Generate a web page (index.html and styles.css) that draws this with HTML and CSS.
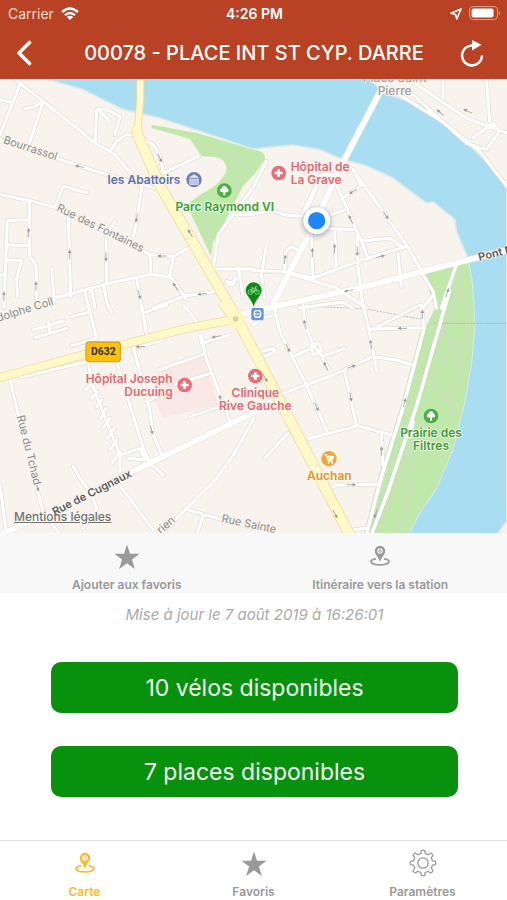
FILE: index.html
```html
<!DOCTYPE html>
<html lang="fr">
<head>
<meta charset="utf-8">
<meta name="viewport" content="width=device-width, initial-scale=1">
<title>Station 00078</title>
<link rel="stylesheet" href="styles.css">
</head>
<body>
<svg class="sprite" aria-hidden="true">
  <symbol id="star" viewBox="0 0 26 26"><path d="M13 .5 16 9.700H25.600L17.900 15.400 20.900 25 13 19.200 5.100 25 8.100 15.400.4 9.700H10Z" fill="currentColor"/></symbol>
  <symbol id="pin" viewBox="0 0 20 22">
    <path d="M6 13.800C2.900 14.200 1 15.200 1 16.600c0 1.900 4 3.300 9 3.300s9-1.400 9-3.300c0-1.400-1.900-2.400-5-2.800" fill="none" stroke="currentColor" stroke-width="1.700"/>
    <path fill-rule="evenodd" d="M10 .7a5.200 5.200 0 0 0-5.200 5.200c0 3.300 3.600 6 5.200 10.600 1.600-4.600 5.200-7.300 5.200-10.600A5.200 5.200 0 0 0 10 .7Zm0 2.500a2.800 2.800 0 1 1 0 5.600 2.800 2.800 0 0 1 0-5.600Z" fill="currentColor"/>
    <circle cx="10" cy="6" r="1.300" fill="none" stroke="currentColor" stroke-width=".8"/>
  </symbol>
  <symbol id="gear" viewBox="0 0 28 28">
    <g fill="none" stroke="currentColor" stroke-width="1.300" stroke-linejoin="round">
      <path d="M11.800 4.600 12.300 1.600Q14 .8 15.700 1.600L16.200 4.600Q17.700 5 19.100 5.800L21.600 4Q23.400 4.600 24 6.400L22.200 8.900Q23 10.300 23.400 11.800L26.400 12.300Q27.200 14 26.400 15.700L23.400 16.200Q23 17.700 22.200 19.100L24 21.600Q23.400 23.400 21.600 24L19.100 22.200Q17.700 23 16.200 23.400L15.700 26.400Q14 27.200 12.300 26.400L11.800 23.400Q10.300 23 8.900 22.200L6.400 24Q4.600 23.400 4 21.600L5.800 19.100Q5 17.700 4.600 16.200L1.600 15.700Q.8 14 1.600 12.300L4.600 11.800Q5 10.300 5.800 8.900L4 6.400Q4.600 4.600 6.400 4L8.900 5.800Q10.300 5 11.800 4.600Z"/>
      <circle cx="14" cy="14" r="5.200"/>
    </g>
  </symbol>
  <symbol id="tree" viewBox="-23 -23 46 46">
    <circle r="22" fill="#48ae45"/><path d="M-3 14V4Q-13 7-13-1-13-6-8-7-7-14 0-14T8-7Q13-6 13-1 13 7 3 4V14Z" fill="#fff"/>
  </symbol>
  <symbol id="cross" viewBox="-23 -23 46 46">
    <circle r="22" fill="#eb6d77"/><path d="M-4-12H4V-4H12V4H4V12H-4V4H-12V-4H-4Z" fill="#fff"/>
  </symbol>
  <symbol id="oneway" viewBox="-17 -7 34 14" overflow="visible">
    <path d="M-15 0H8" stroke="#aaa" stroke-width="3"/><path d="M3-5 14 0 3 5Z" fill="#999"/>
  </symbol>
</svg>

<div class="app">
  <header class="header">
    <div class="status">
      <div class="carrier">Carrier
        <svg width="18" height="14" viewBox="0 0 18 14" fill="none" stroke="#fff" stroke-width="2.400"><path d="M1 5Q9-2 17 5M4 8.200Q9 3.800 14 8.200"/><path d="M9 13 5.800 9.900Q9 7.400 12.200 9.900Z" fill="#fff" stroke="none"/></svg>
      </div>
      <div class="clock">4:26 PM</div>
      <div class="indicators">
        <svg width="12" height="12" viewBox="0 0 12 12" fill="none" stroke="#fff" stroke-width="1.600" stroke-linejoin="round"><path d="M11 1 1 5.200 5.600 6.400 6.800 11Z"/></svg>
        <svg width="32" height="15" viewBox="0 0 32 15"><rect x=".6" y=".6" width="28" height="13" rx="4" fill="none" stroke="#fff" stroke-opacity=".5"/><rect x="2.600" y="2.600" width="22" height="9" rx="2" fill="#fff"/><path d="M30 5Q32 7 30 9.500Z" fill="#fff" fill-opacity=".5"/></svg>
      </div>
    </div>
    <div class="navbar">
      <button class="icon-button" type="button" aria-label="Retour">
        <svg width="16" height="26" viewBox="0 0 16 26" fill="none" stroke="#fff" stroke-width="3.600" stroke-linecap="round" stroke-linejoin="round"><path d="M13.500 2.500 3 13 13.500 23.500"/></svg>
      </button>
      <h1 class="title">00078 - PLACE INT ST CYP. DARRE</h1>
      <button class="icon-button" type="button" aria-label="Actualiser">
        <svg width="24" height="28" viewBox="0 0 24 28"><path d="M13 6.500A10 10 0 1 0 22 16.500" fill="none" stroke="#fff" stroke-width="2.400"/><path d="M12 1 21.500 5.800 12 11.500Z" fill="#fff"/></svg>
      </button>
    </div>
  </header>

  <main class="main">
    <section class="map" aria-label="Carte">
      <svg class="map-canvas" viewBox="0 0 1521 1362" preserveAspectRatio="xMidYMin slice">
        <defs>
          <filter id="soft" x="-50%" y="-50%" width="200%" height="200%"><feGaussianBlur stdDeviation="8"/></filter>
          <g id="minor" fill="none" stroke-linejoin="round" stroke-linecap="round">
            <g transform="translate(0 -3)">
              <path d="M45 5 130 70 285 195 345 230 425 325M60 20 0 170M130 70 85 205M0 65 32 72M130 70 100 88 75 92M0 185 170 242 320 290 480 335M285 200 290 95 315 92 360 115 345 170M300 100 330 130M330 220 350 190 380 170 410 170 460 200 480 235 490 285 595 235M0 350 90 368 170 390M165 385 190 325 262 345M170 390 410 510 450 530 520 535 575 505M425 330 410 430 400 475M345 430 318 470 320 615M205 420 212 655M88 370 88 535 108 560 110 690M85 425 22 428 12 690M18 500 85 503M18 545 65 548 50 600 52 655M155 570 162 665 162 690M0 590 15 590M110 675 320 618 455 588 515 600 560 665M450 530 453 588M520 538 508 598M410 600 425 690M255 640 265 690M275 635 285 690M310 620 325 690M460 690 550 655 650 640 720 600M640 570 655 470 700 410 762 408M715 570 730 660M680 610 700 620 705 600M640 573 762 573"/>
            </g>
            <g transform="translate(759 -3)">
              <path d="M-60 410 0 330 40 250M-60 408 0 408 60 398 100 412 145 415 205 290 240 290M205 290 160 400M270 360 325 322 300 275M300 275 460 500 495 560 510 590 540 640 550 690M250 320 330 500 345 545M235 410 275 395M210 450 300 455M325 490 410 480 450 510M0 578 90 580 180 600 330 545 460 505M175 470 180 600M245 460 250 575M312 475 315 570 330 690M435 525 445 625M95 580 98 520 115 505 130 515M40 505 25 590 35 660M90 580 250 630 340 690M140 690 270 672 300 690M610 560 565 690M510 690 540 650M470 5 640 120 762 165M570 0 570 60M700 0 710 130M400 30 480 50 640 195 700 215 740 160 720 135 660 180M430 45 560 125 680 220 762 325"/>
            </g>
            <g transform="translate(0 678)">
              <path d="M265 0 290 100 215 122M215 35 265 22M325 0 335 22M425 0 440 90M435 22 500 0M550 0 590 50M100 75 190 48M105 98 200 70M145 50 150 80M60 217 260 170M30 225 55 330M110 550 130 620M265 172 275 235 360 450 360 500M350 170 430 430 450 475M275 235 255 255M292 260 275 280M305 285 290 305M318 310 302 340M330 340 308 370M342 370 322 400M350 405 330 435M360 440 335 475M360 450 420 430 435 465 385 460M400 130 445 290 460 390 490 460M475 195 610 148M605 90 615 150 690 350M600 90 605 115 690 90M525 240 630 205M570 335 650 308M440 290 480 270M220 485 240 520 270 560 290 610 250 670M450 475 490 510M355 535 470 690M762 340 700 450 650 520 560 610 480 690M555 612 600 625 762 670M610 630 590 690M0 540 20 690M130 620 180 690M400 130 490 105"/>
            </g>
            <g transform="translate(759 678)">
              <path d="M0 60 30 40 70 28M65 10 80 80 155 230 225 385M150 0 155 50 180 120 205 150 225 190M175 120 200 115 205 140 180 150ZM120 155 175 130M215 152 275 130M35 155 65 140 60 130 25 140M90 265 240 210 360 155 430 165 485 182M330 0 345 60 372 200M355 75 500 0M355 72 515 68M505 0 512 60M275 200 310 360M165 402 315 362 415 390M385 390 390 480M235 550 250 540 375 538M35 460 105 385M300 675 345 668M480 350 470 395"/>
            </g>
          </g>
          <g id="major" fill="none" stroke-linecap="round" stroke-linejoin="round">
            <path d="M1155 10 1020 267 948 425 822 670M700 710 820 683 1089 625 1270 577 1521 513"/>
            <path d="M0 1368 170 1290 450 1152 759 1002 830 960"/>
          </g>
          <g id="quay" fill="none"><path d="M1275 738 1205 1000 1145 1190 1099 1368M1350 630 1250 980 1165 1235 1114 1368"/></g>
          <path id="route" fill="none" d="M0 896 259 825 560 748 700 722M665 670 700 720"/>
          <path id="avenue" fill="none" stroke-linejoin="round" d="M412 145V165L480 320 700 700 790 870 1060 1390"/>
        </defs>
        <rect width="1521" height="1365" fill="#f8f4ed"/>
        <path d="M140 0 250 32 370 92 480 117 600 157 759 210 880 198 960 212 1030 242 1100 260 1180 298 1279 372 1300 369 1365 422 1369 457 1400 527 1415 600 1422 690 1424 740 1414 850 1394 968 1359 1108 1309 1228 1259 1300 1225 1368H1490L1521 1325V330L1479 267 1399 192 1319 117 1259 77 1150 42 1110 0Z" fill="#a9def2" stroke="#dcebe9" stroke-width="5"/>
        <g fill="#bfe8aa">
          <path d="M455 137 590 162 762 212Q800 217 794 242L762 287 730 320 700 377 655 467 640 487 633 532 560 377 600 347Q675 310 680 267 675 240 650 235L605 232 570 180 455 147Z"/>
          <path d="M1274 587 1404 547 1414 600 1422 690 1424 740 1414 850 1394 968 1359 1108 1309 1228 1259 1300 1225 1368H1105L1279 740 1304 690Z"/>
        </g>
        <path d="M480 862 610 828 655 978 490 1016 455 950Z" fill="#f9e8e5"/>
        <path d="M590 190 640 215 700 230 740 260 700 330M650 370 620 440 630 490M1350 700Q1310 780 1360 795T1400 700 1350 690M1360 795Q1300 880 1300 920L1345 970 1360 965 1358 1010M1360 795Q1400 850 1345 970M1310 990 1240 1120 1225 1290 1180 1368M1380 570 1360 690 1300 830M1260 1020 1200 1180 1130 1368" fill="none" stroke="#cfdcc0" stroke-width="5"/>
        <path d="M900 680 1100 690 1270 722M1300 733H1521" fill="none" stroke="#aaa9a4" stroke-width="2" stroke-dasharray="7 3"/>
        <use href="#minor" stroke="#deddd8" stroke-width="13"/>
        <use href="#quay" stroke="#c6d9bb" stroke-width="16"/>
        <use href="#major" stroke="#e2e1dc" stroke-width="20"/>
        <use href="#minor" stroke="#fff" stroke-width="9"/>
        <use href="#quay" stroke="#fff" stroke-width="11"/>
        <use href="#major" stroke="#fff" stroke-width="17"/>
        <use href="#route" stroke="#f3d9a4" stroke-width="27"/>
        <path d="M421-10V60L412 165" fill="none" stroke="#f3d9a4" stroke-width="24"/>
        <use href="#avenue" stroke="#f3d9a4" stroke-width="34"/>
        <use href="#route" stroke="#fff9c8" stroke-width="22"/>
        <path d="M421-10V60L412 165" fill="none" stroke="#fff9c8" stroke-width="18"/>
        <use href="#avenue" stroke="#fff9c8" stroke-width="29"/>
        <circle cx="707" cy="720" r="27" fill="#fff5bf"/><circle cx="707" cy="720" r="7" fill="#ddd5aa" stroke="#c5bd94" stroke-width="2"/>

        <g>
          <use href="#oneway" width="34" height="14" x="-17" y="-7" transform="translate(238 262) rotate(195)"/>
          <use href="#oneway" width="34" height="14" x="-17" y="-7" transform="translate(480 238) rotate(65)"/>
          <use href="#oneway" width="34" height="14" x="-17" y="-7" transform="translate(410 418) rotate(100)"/>
          <use href="#oneway" width="34" height="14" x="-17" y="-7" transform="translate(570 462) rotate(240)"/>
          <use href="#oneway" width="34" height="14" x="-17" y="-7" transform="translate(86 460) rotate(270)"/>
          <use href="#oneway" width="34" height="14" x="-17" y="-7" transform="translate(209 525) rotate(270)"/>
          <use href="#oneway" width="34" height="14" x="-17" y="-7" transform="translate(318 535) rotate(90)"/>
          <use href="#oneway" width="34" height="14" x="-17" y="-7" transform="translate(485 531) rotate(180)"/>
          <use href="#oneway" width="34" height="14" x="-17" y="-7" transform="translate(108 620) rotate(270)"/>
          <use href="#oneway" width="34" height="14" x="-17" y="-7" transform="translate(12 650) rotate(270)"/>
          <use href="#oneway" width="34" height="14" x="-17" y="-7" transform="translate(526 622) rotate(235)"/>
          <use href="#oneway" width="34" height="14" x="-17" y="-7" transform="translate(605 645) rotate(175)"/>
          <use href="#oneway" width="34" height="14" x="-17" y="-7" transform="translate(418 648) rotate(75)"/>
          <use href="#oneway" width="34" height="14" x="-17" y="-7" transform="translate(1058 338) rotate(145)"/>
          <use href="#oneway" width="34" height="14" x="-17" y="-7" transform="translate(1052 420) rotate(245)"/>
          <use href="#oneway" width="34" height="14" x="-17" y="-7" transform="translate(1158 410) rotate(55)"/>
          <use href="#oneway" width="34" height="14" x="-17" y="-7" transform="translate(855 540) rotate(280)"/>
          <use href="#oneway" width="34" height="14" x="-17" y="-7" transform="translate(937 520) rotate(270)"/>
          <use href="#oneway" width="34" height="14" x="-17" y="-7" transform="translate(1004 508) rotate(270)"/>
          <use href="#oneway" width="34" height="14" x="-17" y="-7" transform="translate(1072 518) rotate(90)"/>
          <use href="#oneway" width="34" height="14" x="-17" y="-7" transform="translate(1142 532) rotate(-15)"/>
          <use href="#oneway" width="34" height="14" x="-17" y="-7" transform="translate(1045 635) rotate(170)"/>
          <use href="#oneway" width="34" height="14" x="-17" y="-7" transform="translate(1342 640) rotate(290)"/>
          <use href="#oneway" width="34" height="14" x="-17" y="-7" transform="translate(1320 100) rotate(220)"/>
          <use href="#oneway" width="34" height="14" x="-17" y="-7" transform="translate(1402 96) rotate(205)"/>
          <use href="#oneway" width="34" height="14" x="-17" y="-7" transform="translate(420 803) rotate(175)"/>
          <use href="#oneway" width="34" height="14" x="-17" y="-7" transform="translate(648 773) rotate(170)"/>
          <use href="#oneway" width="34" height="14" x="-17" y="-7" transform="translate(455 1054) rotate(75)"/>
          <use href="#oneway" width="34" height="14" x="-17" y="-7" transform="translate(662 960) rotate(255)"/>
          <use href="#oneway" width="34" height="14" x="-17" y="-7" transform="translate(112 1225) rotate(75)"/>
          <use href="#oneway" width="34" height="14" x="-17" y="-7" transform="translate(864 808) rotate(65)"/>
          <use href="#oneway" width="34" height="14" x="-17" y="-7" transform="translate(915 735) rotate(255)"/>
          <use href="#oneway" width="34" height="14" x="-17" y="-7" transform="translate(977 860) rotate(245)"/>
          <use href="#oneway" width="34" height="14" x="-17" y="-7" transform="translate(1055 863) rotate(-20)"/>
          <use href="#oneway" width="34" height="14" x="-17" y="-7" transform="translate(1113 795) rotate(260)"/>
          <use href="#oneway" width="34" height="14" x="-17" y="-7" transform="translate(1206 748) rotate(180)"/>
          <use href="#oneway" width="34" height="14" x="-17" y="-7" transform="translate(1267 705) rotate(270)"/>
          <use href="#oneway" width="34" height="14" x="-17" y="-7" transform="translate(950 985) rotate(65)"/>
          <use href="#oneway" width="34" height="14" x="-17" y="-7" transform="translate(1052 955) rotate(80)"/>
          <use href="#oneway" width="34" height="14" x="-17" y="-7" transform="translate(1214 970) rotate(285)"/>
          <use href="#oneway" width="34" height="14" x="-17" y="-7" transform="translate(1145 1115) rotate(270)"/>
          <use href="#oneway" width="34" height="14" x="-17" y="-7" transform="translate(1055 1217)"/>
          <use href="#oneway" width="34" height="14" x="-17" y="-7" transform="translate(1006 1306) rotate(62)"/>
          <use href="#oneway" width="34" height="14" x="-17" y="-7" transform="translate(1127 1305) rotate(110)"/>
          <use href="#oneway" width="34" height="14" x="-17" y="-7" transform="translate(796 898) rotate(60)"/>
        </g>

        <g class="street">
          <text transform="translate(8 192) rotate(18)">Bourrassol</text>
          <text transform="translate(168 394) rotate(26)">Rue des Fontaines</text>
          <text transform="translate(-6 728) rotate(-17)">dolphe Coll</text>
          <text transform="translate(50 1012) rotate(76)">Rue du Tchad</text>
          <text transform="translate(663 1328) rotate(12)">Rue Sainte</text>
          <text transform="translate(482 1366) rotate(-41)">rien</text>
        </g>
        <g class="street street-main">
          <text transform="translate(164 1310) rotate(-27)">Rue de Cugnaux</text>
          <text transform="translate(1438 546) rotate(-14)">Pont Neuf</text>
        </g>
        <g class="place place-square"><text x="1184" y="10">Place Saint</text><text x="1184" y="48">Pierre</text></g>
        <g class="place place-museum"><text x="432" y="315">les Abattoirs</text></g>
        <g class="place place-park"><text x="674" y="396">Parc Raymond VI</text><text x="1293" y="1073">Prairie des</text><text x="1293" y="1113">Filtres</text></g>
        <g class="place place-health">
          <text x="872" y="276" text-anchor="start">Hôpital de</text><text x="872" y="314" text-anchor="start">La Grave</text>
          <text x="518" y="912" text-anchor="end">Hôpital Joseph</text><text x="518" y="950" text-anchor="end">Ducuing</text>
          <text x="766" y="954">Clinique</text><text x="766" y="992">Rive Gauche</text>
        </g>
        <g class="place place-shop"><text x="988" y="1203">Auchan</text></g>

        <circle cx="582" cy="302" r="23" fill="#6f80b8"/>
        <path d="M582 286 598 296H566ZM568 299H596V317H568Z" fill="#e6e9f5"/><path d="M573 301V315M579 301V315M585 301V315M591 301V315" stroke="#6f80b8" stroke-width="2"/>
        <use href="#tree" x="650" y="312" width="46" height="46"/>
        <use href="#tree" x="1270" y="988" width="46" height="46"/>
        <use href="#cross" x="813" y="259" width="46" height="46"/>
        <use href="#cross" x="531" y="895" width="46" height="46"/>
        <use href="#cross" x="743" y="868" width="46" height="46"/>
        <circle cx="987" cy="1139" r="23" fill="#efa72e"/>
        <path d="M973 1127H979L984 1146H999M981 1132H1002L998 1141H984Z" fill="#fff" stroke="#fff" stroke-width="3"/><circle cx="986" cy="1151" r="3" fill="#fff"/><circle cx="997" cy="1151" r="3" fill="#fff"/>
        <rect x="258" y="789" width="103" height="59" rx="10" fill="#fcc20a" stroke="#e2a21b" stroke-width="4"/>
        <text class="road-number" x="310" y="829">D632</text>
        <rect x="754" y="687" width="37" height="37" rx="6" fill="#5d96e8"/><rect x="763" y="695" width="19" height="19" rx="7" fill="none" stroke="#fff" stroke-width="4"/><path d="M764 705H781M766 718 769 714M779 718 776 714" stroke="#fff" stroke-width="3"/>
        <path d="M761 683C755 660 737 650 737 634A24 24 0 0 1 785 634C785 650 767 660 761 683Z" fill="#0a8e12"/>
        <g fill="none" stroke="#bfe5bf" stroke-width="2"><circle cx="751" cy="639" r="7"/><circle cx="771" cy="639" r="7"/><path d="M751 639 757 628H767L771 639M757 628 762 639 767 628M751 639H762M754 626H759M767 628 766 623H771"/></g>
        <circle cx="950" cy="430" r="43" fill="#555" opacity=".4" filter="url(#soft)"/>
        <circle cx="950" cy="425" r="40" fill="#fff"/><circle cx="950" cy="425" r="26" fill="#1f85fb"/>
      </svg>
      <a class="legal" href="#">Mentions légales</a>
    </section>

    <div class="actions">
      <button class="action" type="button"><svg class="icon-star"><use href="#star"/></svg><span>Ajouter aux favoris</span></button>
      <button class="action" type="button"><svg class="icon-pin"><use href="#pin"/></svg><span>Itinéraire vers la station</span></button>
    </div>

    <section class="availability">
      <p class="updated">Mise à jour le 7 août 2019 à 16:26:01</p>
      <button class="count" type="button">10 vélos disponibles</button>
      <button class="count" type="button">7 places disponibles</button>
    </section>
  </main>

  <nav class="tabs">
    <a class="tab tab-active" href="#"><svg class="icon-pin"><use href="#pin"/></svg><span>Carte</span></a>
    <a class="tab" href="#"><svg class="icon-star"><use href="#star"/></svg><span>Favoris</span></a>
    <a class="tab" href="#"><svg class="icon-gear"><use href="#gear"/></svg><span>Paramètres</span></a>
  </nav>
</div>
</body>
</html>
```

FILE: styles.css
```css
* { box-sizing: border-box; }
body { margin: 0; background: #fff; font-family: Inter, "Liberation Sans", sans-serif; }
button { margin: 0; padding: 0; border: 0; background: none; font: inherit; color: inherit; }
svg { display: block; }
.sprite { position: absolute; width: 0; height: 0; }

.app { display: flex; flex-direction: column; min-height: 100vh; }

.header { background: #b94124; color: #fff; padding-bottom: 1px; }
.status { display: grid; grid-template-columns: 1fr auto 1fr; align-items: center; height: 27px; padding: 0 6px 0 8px; font-size: 14px; }
.carrier { display: flex; align-items: center; gap: 7px; color: #f6ddd6; }
.clock { font-weight: 600; }
.indicators { display: flex; align-items: center; justify-content: flex-end; gap: 7px; }
.navbar { display: grid; grid-template-columns: 24px 1fr 24px; align-items: center; height: 51px; padding: 0 23px 0 12px; }
.icon-button { display: flex; align-items: center; justify-content: center; height: 44px; }
.title { margin: 0; padding-left: 12px; font-size: 20px; line-height: 28px; font-weight: 500; text-align: center; }

.main { flex: 1; display: flex; flex-direction: column; }
.map { position: relative; flex: 1; min-height: 240px; display: flex; overflow: hidden; }
.map-canvas { flex: 1; width: 100%; height: auto; aspect-ratio: 1521 / 1362; }
.legal { position: absolute; left: 14px; bottom: 8px; color: #737373; font-size: 12px; line-height: 16px; font-weight: 500; }

.map text { paint-order: stroke; stroke: #f8f4ed; stroke-width: 5px; stroke-linejoin: round; }
.street { fill: #8b8b8a; font-size: 33px; }
.street-main { fill: #5d5d5d; font-weight: 600; }
.place { font-size: 36px; font-weight: 600; text-anchor: middle; }
.place-square { fill: #a1a1a1; font-weight: 500; }
.place-museum { fill: #6071b1; }
.place-park { fill: #399f35; }
.place-health { fill: #e86873; }
.place-shop { fill: #dc9a28; }
.map .road-number { fill: #35311a; stroke: none; font-family: Roboto, Inter, sans-serif; font-size: 31px; font-weight: 700; text-anchor: middle; }

.actions { display: grid; grid-template-columns: 1fr 1fr; height: 60px; background: #f8f8f8; color: #999; }
.action, .tab { display: flex; flex-direction: column; align-items: center; justify-content: flex-end; gap: 7px; font-size: 12px; line-height: 16px; font-weight: 600; }
.icon-star { width: 26px; height: 26px; }
.icon-pin { width: 20px; height: 22px; margin-bottom: 3px; }
.icon-gear { width: 28px; height: 28px; }

.availability { display: flex; flex-direction: column; align-items: center; padding: 12px 49px 43px 51px; }
.updated { margin: 0 0 37px; color: #aaa; font-size: 15px; line-height: 20px; font-style: italic; }
.count { width: 100%; height: 51px; border-radius: 10px; background: #08910d; color: #effaef; font-size: 23px; }
.count + .count { margin-top: 33px; }

.tabs { display: grid; grid-template-columns: repeat(3, 1fr); height: 60px; border-top: 1px solid #dedede; background: #fff; }
.tab { color: #999; text-decoration: none; }
.tab-active { color: #fabc2d; }
```
